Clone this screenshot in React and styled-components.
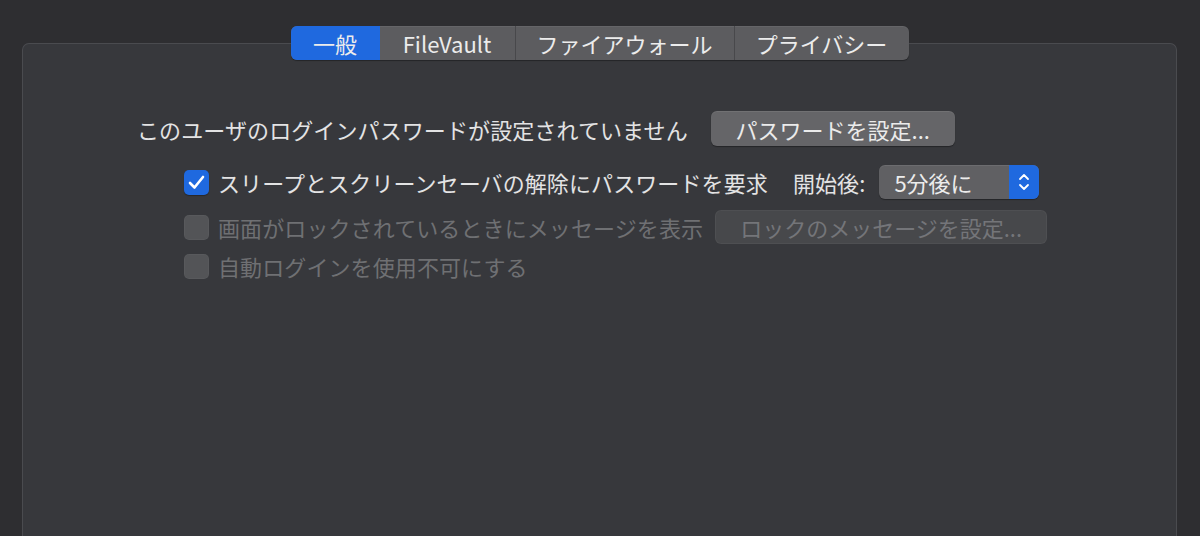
import React from "react";
import styled, { createGlobalStyle } from "styled-components";

const Global = createGlobalStyle`
  html, body { margin: 0; padding: 0; background: #2e2e31; overflow: hidden; }
  body { font-family: "Noto Sans CJK JP", "Noto Sans", sans-serif; }
`;

const Page = styled.div`
  width: 1200px;
  height: 536px;
  box-sizing: border-box;
  padding: 43px 23px 0 22px;
  overflow: hidden;
`;

const Panel = styled.div`
  height: 560px;
  box-sizing: border-box;
  border: 1px solid #4a4b4f;
  border-bottom: none;
  border-radius: 7px 7px 0 0;
  background: #37383c;
  display: flex;
  flex-direction: column;
`;

const TabBar = styled.div`
  display: flex;
  align-self: center;
  margin-top: -18px;
  height: 34px;
  border-radius: 6px;
  background: #5c5c5f;
  overflow: hidden;
  box-shadow: 0 1px 1px rgba(0, 0, 0, 0.35), inset 0 1px 0 rgba(255, 255, 255, 0.06);
`;

const Tab = styled.div`
  display: flex;
  align-items: center;
  justify-content: center;
  width: ${(p) => p.$w}px;
  font-size: 22px;
  color: #ececec;
  background: ${(p) => (p.$active ? "#1f69df" : "transparent")};
  border-left: ${(p) => (p.$first || p.$afterActive ? "none" : "1px solid #48484b")};
  box-sizing: border-box;
  line-height: 1;
  padding-bottom: 1px;
`;

const Content = styled.div`
  display: flex;
  flex-direction: column;
  padding-top: 51px;
`;

const Row = styled.div`
  display: flex;
  align-items: center;
  padding-left: ${(p) => p.$indent}px;
  margin-top: ${(p) => p.$mt || 0}px;
  height: ${(p) => p.$h || 35}px;
`;

const Label = styled.span`
  font-size: 22px;
  line-height: 1;
  letter-spacing: 0.1px;
  color: ${(p) => (p.$disabled ? "#6f7073" : "#e3e3e4")};
  margin-right: ${(p) => p.$mr || 0}px;
  white-space: nowrap;
`;

const Button = styled.div`
  display: flex;
  align-items: center;
  justify-content: center;
  width: ${(p) => p.$w}px;
  height: ${(p) => p.$h || 35}px;
  box-sizing: border-box;
  border-radius: 6px;
  font-size: 22px;
  line-height: 1;
  color: ${(p) => (p.$disabled ? "#747579" : "#ebebeb")};
  background: ${(p) => (p.$disabled ? "#47484b" : "#656568")};
  box-shadow: ${(p) =>
    p.$disabled
      ? "inset 0 0 0 1px rgba(255,255,255,0.04)"
      : "0 1px 1px rgba(0,0,0,0.35), inset 0 1px 0 rgba(255,255,255,0.08)"};
`;

const Check = styled.div`
  width: 25px;
  height: 25px;
  flex: none;
  border-radius: 5px;
  box-sizing: border-box;
  margin-right: 9px;
  display: flex;
  align-items: center;
  justify-content: center;
  background: ${(p) => (p.$checked ? "#1f69df" : "#535457")};
  box-shadow: ${(p) => (p.$checked ? "0 1px 1px rgba(0,0,0,0.3)" : "inset 0 0 0 1px rgba(255,255,255,0.03)")};
`;

const Select = styled.div`
  display: flex;
  width: 160px;
  height: 34px;
  border-radius: 6px;
  overflow: hidden;
  background: #606063;
  box-shadow: 0 1px 1px rgba(0, 0, 0, 0.35), inset 0 1px 0 rgba(255, 255, 255, 0.08);
`;

const SelectValue = styled.div`
  flex: 1;
  display: flex;
  align-items: center;
  padding-left: 15px;
  font-size: 22px;
  line-height: 1;
  color: #ececec;
`;

const SelectArrow = styled.div`
  width: 30px;
  background: #1f69df;
  display: flex;
  align-items: center;
  justify-content: center;
`;

const tabs = [
  { t: "一般", w: 89, active: true },
  { t: "FileVault", w: 135 },
  { t: "ファイアウォール", w: 219 },
  { t: "プライバシー", w: 175 },
];

export default function App() {
  return (
    <>
      <Global />
      <Page>
        <Panel>
          <TabBar>
            {tabs.map((tb, i) => (
              <Tab
                key={tb.t}
                $w={tb.w}
                $active={tb.active}
                $first={i === 0}
                $afterActive={i > 0 && tabs[i - 1].active}
              >
                {tb.t}
              </Tab>
            ))}
          </TabBar>
          <Content>
            <Row $indent={114}>
              <Label $mr={23}>このユーザのログインパスワードが設定されていません</Label>
              <Button $w={244}>パスワードを設定...</Button>
            </Row>
            <Row $indent={161} $mt={19} $h={34}>
              <Check $checked>
                <svg width="17" height="15" viewBox="0 0 17 15">
                  <path d="M2 8 L6.5 12.5 L15 2" fill="none" stroke="#fff" strokeWidth="2.6" strokeLinecap="round" strokeLinejoin="round" />
                </svg>
              </Check>
              <Label $mr={25}>スリープとスクリーンセーバの解除にパスワードを要求</Label>
              <Label $mr={14}>開始後:</Label>
              <Select>
                <SelectValue>5分後に</SelectValue>
                <SelectArrow>
                  <svg width="14" height="22" viewBox="0 0 14 22">
                    <path d="M3 8 L7 4 L11 8" fill="none" stroke="#fff" strokeWidth="1.8" strokeLinecap="round" strokeLinejoin="round" />
                    <path d="M3 14 L7 18 L11 14" fill="none" stroke="#fff" strokeWidth="1.8" strokeLinecap="round" strokeLinejoin="round" />
                  </svg>
                </SelectArrow>
              </Select>
            </Row>
            <Row $indent={161} $mt={11} $h={34}>
              <Check />
              <Label $disabled $mr={12}>画面がロックされているときにメッセージを表示</Label>
              <Button $disabled $w={332} $h={34}>ロックのメッセージを設定...</Button>
            </Row>
            <Row $indent={161} $mt={5} $h={34}>
              <Check />
              <Label $disabled>自動ログインを使用不可にする</Label>
            </Row>
          </Content>
        </Panel>
      </Page>
    </>
  );
}
